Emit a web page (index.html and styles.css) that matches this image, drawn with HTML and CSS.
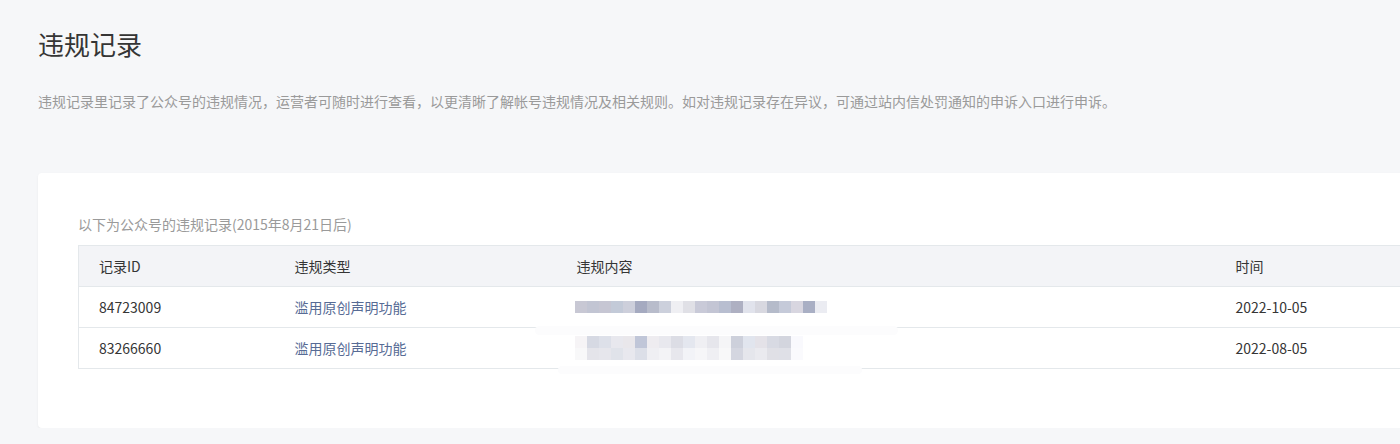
FILE: index.html
```html
<!DOCTYPE html>
<html lang="zh-CN">
<head>
<meta charset="utf-8">
<title>违规记录</title>
<link rel="stylesheet" href="styles.css">
</head>
<body>
<div class="page">
  <h1 class="title">违规记录</h1>
  <p class="desc">违规记录里记录了公众号的违规情况，运营者可随时进行查看，以更清晰了解帐号违规情况及相关规则。如对违规记录存在异议，可通过站内信处罚通知的申诉入口进行申诉。</p>
  <div class="card">
    <p class="caption">以下为公众号的违规记录(2015年8月21日后)</p>
    <table class="table">
      <colgroup>
        <col class="c-id"><col class="c-type"><col class="c-content"><col class="c-time">
      </colgroup>
      <thead>
        <tr><th>记录ID</th><th>违规类型</th><th>违规内容</th><th>时间</th></tr>
      </thead>
      <tbody>
        <tr>
          <td>84723009</td>
          <td class="type">滥用原创声明功能</td>
          <td class="content">
            <div class="mosaic" id="m1"></div>
            <div class="haze haze-1"></div>
          </td>
          <td>2022-10-05</td>
        </tr>
        <tr>
          <td>83266660</td>
          <td class="type">滥用原创声明功能</td>
          <td class="content">
            <div class="mosaic" id="m2"></div>
            <div class="mosaic" id="m3"></div>
            <div class="haze haze-2"></div>
          </td>
          <td>2022-08-05</td>
        </tr>
      </tbody>
    </table>
  </div>
</div>
<script src="script.js"></script>
</body>
</html>
```
FILE: styles.css
```css
html, body { margin: 0; padding: 0; }
body {
  background: #f6f7f9;
  font-family: "Noto Sans CJK SC", "Liberation Sans", sans-serif;
  color: #353535;
}
.page {
  padding: 26px 0 0 38px;
}
.title {
  margin: 0;
  font-size: 26px;
  line-height: 36px;
  font-weight: 400;
  color: #353535;
}
.desc {
  margin: 29px 0 0;
  font-size: 14px;
  line-height: 20px;
  color: #9a9a9a;
}
.card {
  margin-top: 62px;
  background: #fff;
  border-radius: 4px 0 0 4px;
  box-shadow: 0 1px 2px rgba(150,150,150,0.12);
  padding: 41px 0 59px 40px;
}
.caption {
  margin: 0 0 11px;
  font-size: 14px;
  line-height: 20px;
  color: #9a9a9a;
}
.table {
  border-collapse: collapse;
  table-layout: fixed;
  width: 100%;
  font-size: 14px;
  border-left: 1px solid #e4e8eb;
}
.c-id { width: 196px; }
.c-type { width: 282px; }
.c-content { width: 659px; }
.table th, .table td {
  text-align: left;
  font-weight: 400;
  padding: 0 20px;
  height: 40px;
  border-top: 1px solid #e4e8eb;
  border-bottom: 1px solid #e4e8eb;
  color: #353535;
  white-space: nowrap;
}
.table th { background: #f3f4f7; }
.table td.type { color: #576b95; }
.table td.content { position: relative; }
.mosaic {
  display: flex;
  margin-left: -2px;
  height: 12px;
}
.mosaic span { width: 12px; height: 12px; flex: none; }
.haze {
  position: absolute;
  background: #fcfcfd;
  border-radius: 6px;
}
.haze-1 { left: -22px; width: 363px; top: 39px; height: 9px; }
.haze-2 { left: 1px; width: 304px; top: 38px; height: 8px; }
```
FILE: script.js
```js
const rows = {
  m1: ["#c8c8d4","#c2c5d3","#c6c6d3","#c3cad8","#cdcfdb","#a5aac0","#b8bccb","#ccd0dc","#efeff3","#e0e0e6","#c9cad8","#c3c5d4","#b8bed0","#aeb0c2","#e1e3ec","#d8d8e0","#b5bbca","#c5cad9","#d8d6e0","#a9afc4","#ebecf2"],
  m2: ["#f6f4f6","#d6d9e3","#dde0e9","#e8e8ee","#e9e7eb","#c0c6d8","#eeecf0","#e8e8ee","#dcdde5","#e4e7ef","#efeff3","#e6e6ec","#f5f5f7","#cdd0db","#e1e5ee","#e4e2e8","#d8dae3","#d3d5de","#f9f9fd"],
  m3: ["#f8f8f9","#e4e4ea","#e6e6ec","#e0e3ea","#e8e8ee","#dcdfe8","#efeff3","#f3f3f6","#e7e7ed","#f2f3f7","#f6f6f8","#efeff3","#f8f8f9","#d4d6e0","#e5e6ec","#eaeaef","#e0e0e6","#dfe0e7","#fafafd"]
};
for (const id in rows) {
  const el = document.getElementById(id);
  rows[id].forEach(c => {
    const s = document.createElement("span");
    s.style.background = c;
    el.appendChild(s);
  });
}
```
